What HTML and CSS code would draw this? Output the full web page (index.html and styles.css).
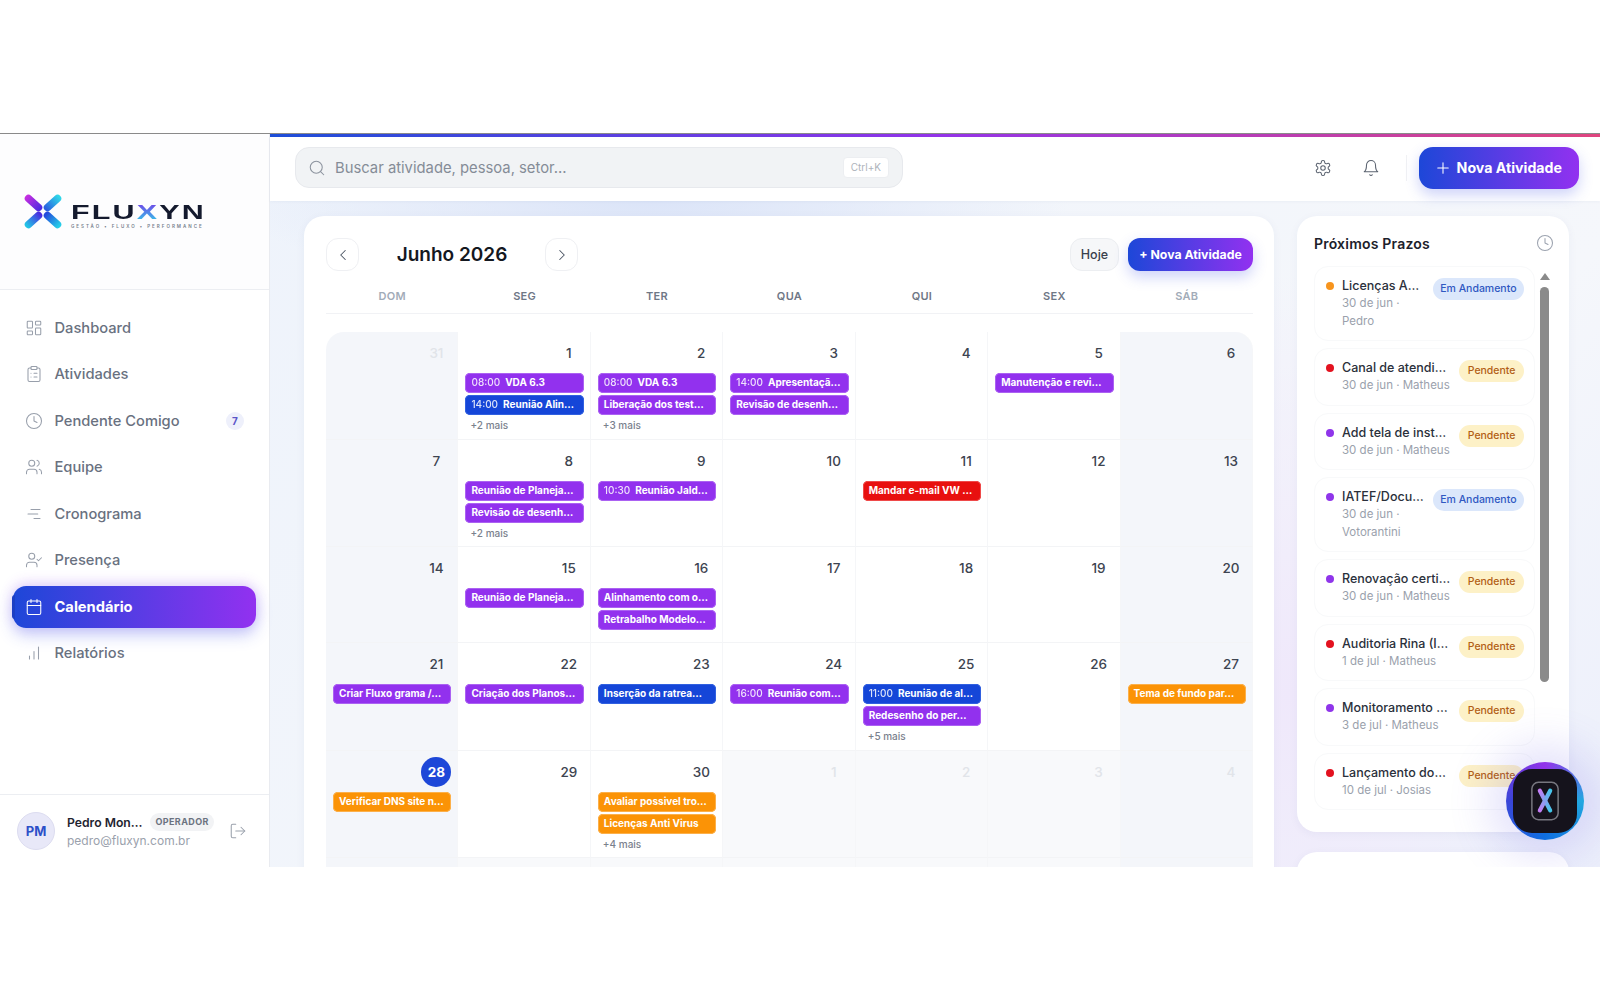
FILE: index.html
```html
<!DOCTYPE html>
<html lang="pt-BR">
<head>
    <meta charset="UTF-8">
    <meta name="viewport" content="width=device-width, initial-scale=1.0">
    <title>Fluxyn - Calendário</title>
    <link rel="stylesheet" href="styles.css">
</head>
<body>
    <svg class="sprite" xmlns="http://www.w3.org/2000/svg">
        <symbol id="i-dash" viewBox="0 0 24 24"><rect width="7" height="9" x="3" y="3" rx="1"/><rect width="7" height="5" x="14" y="3" rx="1"/><rect width="7" height="9" x="14" y="12" rx="1"/><rect width="7" height="5" x="3" y="16" rx="1"/></symbol>
        <symbol id="i-clip" viewBox="0 0 24 24"><rect width="8" height="4" x="8" y="2" rx="1"/><path d="M16 4h2a2 2 0 0 1 2 2v14a2 2 0 0 1-2 2H6a2 2 0 0 1-2-2V6a2 2 0 0 1 2-2h2"/><path d="M12 11h4M12 16h4M8 11h.01M8 16h.01"/></symbol>
        <symbol id="i-clock" viewBox="0 0 24 24"><circle cx="12" cy="12" r="10"/><polyline points="12 6 12 12 16 14"/></symbol>
        <symbol id="i-users" viewBox="0 0 24 24"><path d="M16 21v-2a4 4 0 0 0-4-4H6a4 4 0 0 0-4 4v2"/><circle cx="9" cy="7" r="4"/><path d="M22 21v-2a4 4 0 0 0-3-3.87"/><path d="M16 3.13a4 4 0 0 1 0 7.75"/></symbol>
        <symbol id="i-gantt" viewBox="0 0 24 24"><path d="M8 6h12M4 12h13M12 18h8"/></symbol>
        <symbol id="i-check" viewBox="0 0 24 24"><path d="M16 21v-2a4 4 0 0 0-4-4H6a4 4 0 0 0-4 4v2"/><circle cx="9" cy="7" r="4"/><polyline points="16 11 18 13 22 9"/></symbol>
        <symbol id="i-cal" viewBox="0 0 24 24"><path d="M8 2v4M16 2v4"/><rect width="18" height="18" x="3" y="4" rx="2"/><path d="M3 10h18"/></symbol>
        <symbol id="i-bars" viewBox="0 0 24 24"><path d="M12 20V10M18 20V4M6 20v-4"/></symbol>
        <symbol id="i-search" viewBox="0 0 24 24"><circle cx="11" cy="11" r="8"/><path d="m21 21-4.3-4.3"/></symbol>
        <symbol id="i-gear" viewBox="0 0 24 24"><path d="M12.22 2h-.44a2 2 0 0 0-2 2v.18a2 2 0 0 1-1 1.73l-.43.25a2 2 0 0 1-2 0l-.15-.08a2 2 0 0 0-2.73.73l-.22.38a2 2 0 0 0 .73 2.73l.15.1a2 2 0 0 1 1 1.72v.51a2 2 0 0 1-1 1.74l-.15.09a2 2 0 0 0-.73 2.73l.22.38a2 2 0 0 0 2.73.73l.15-.08a2 2 0 0 1 2 0l.43.25a2 2 0 0 1 1 1.73V20a2 2 0 0 0 2 2h.44a2 2 0 0 0 2-2v-.18a2 2 0 0 1 1-1.73l.43-.25a2 2 0 0 1 2 0l.15.08a2 2 0 0 0 2.73-.73l.22-.39a2 2 0 0 0-.73-2.73l-.15-.08a2 2 0 0 1-1-1.74v-.5a2 2 0 0 1 1-1.74l.15-.09a2 2 0 0 0 .73-2.73l-.22-.38a2 2 0 0 0-2.73-.73l-.15.08a2 2 0 0 1-2 0l-.43-.25a2 2 0 0 1-1-1.73V4a2 2 0 0 0-2-2z"/><circle cx="12" cy="12" r="3"/></symbol>
        <symbol id="i-bell" viewBox="0 0 24 24"><path d="M6 8a6 6 0 0 1 12 0c0 7 3 9 3 9H3s3-2 3-9"/><path d="M10.3 21a1.94 1.94 0 0 0 3.4 0"/></symbol>
        <symbol id="i-out" viewBox="0 0 24 24"><path d="M9 21H5a2 2 0 0 1-2-2V5a2 2 0 0 1 2-2h4"/><polyline points="16 17 21 12 16 7"/><path d="M21 12H9"/></symbol>
        <symbol id="i-plus" viewBox="0 0 24 24"><path d="M5 12h14M12 5v14"/></symbol>
        <symbol id="i-left" viewBox="0 0 24 24"><path d="m15 18-6-6 6-6"/></symbol>
        <symbol id="i-right" viewBox="0 0 24 24"><path d="m9 18 6-6-6-6"/></symbol>
    </svg>

    <div class="app">
        <aside class="sidebar">
            <div class="brand">
                <svg class="brand-mark" viewBox="0 0 38 35" fill="none" stroke-width="7.5" stroke-linecap="round">
                    <defs>
                        <linearGradient id="lg-a" gradientUnits="userSpaceOnUse" x1="3" y1="3" x2="16" y2="15"><stop offset="0" stop-color="#c22ee0"/><stop offset="1" stop-color="#4f2be0"/></linearGradient>
                        <linearGradient id="lg-b" gradientUnits="userSpaceOnUse" x1="35" y1="3" x2="22" y2="15"><stop offset="0" stop-color="#2fd6e8"/><stop offset="1" stop-color="#2a5fe0"/></linearGradient>
                        <linearGradient id="lg-c" gradientUnits="userSpaceOnUse" x1="3" y1="32" x2="16" y2="20"><stop offset="0" stop-color="#22c4e6"/><stop offset="1" stop-color="#4a2be0"/></linearGradient>
                        <linearGradient id="lg-d" gradientUnits="userSpaceOnUse" x1="35" y1="32" x2="22" y2="20"><stop offset="0" stop-color="#25cde8"/><stop offset="1" stop-color="#2448dc"/></linearGradient>
                    </defs>
                    <path d="M4.5 4.5 14.5 13.5" stroke="url(#lg-a)"/>
                    <path d="M33.5 4.5 23.5 13.5" stroke="url(#lg-b)"/>
                    <path d="M4.5 30.5 14.5 21.5" stroke="url(#lg-c)"/>
                    <path d="M33.5 30.5 23.5 21.5" stroke="url(#lg-d)"/>
                </svg>
                <div class="brand-text">
                    <div class="brand-name">FLU<span class="brand-x">X</span>YN</div>
                    <div class="brand-sub">GESTÃO • FLUXO • PERFORMANCE</div>
                </div>
            </div>

            <nav class="nav">
                <a class="nav-item"><svg class="icon"><use href="#i-dash"/></svg>Dashboard</a>
                <a class="nav-item"><svg class="icon"><use href="#i-clip"/></svg>Atividades</a>
                <a class="nav-item"><svg class="icon"><use href="#i-clock"/></svg>Pendente Comigo<span class="nav-badge">7</span></a>
                <a class="nav-item"><svg class="icon"><use href="#i-users"/></svg>Equipe</a>
                <a class="nav-item"><svg class="icon"><use href="#i-gantt"/></svg>Cronograma</a>
                <a class="nav-item"><svg class="icon"><use href="#i-check"/></svg>Presença</a>
                <a class="nav-item active"><svg class="icon"><use href="#i-cal"/></svg>Calendário</a>
                <a class="nav-item"><svg class="icon"><use href="#i-bars"/></svg>Relatórios</a>
            </nav>

            <div class="user">
                <div class="avatar">PM</div>
                <div class="user-info">
                    <div class="user-top"><span class="user-name">Pedro Mon…</span><span class="user-role">OPERADOR</span></div>
                    <div class="user-mail">pedro@fluxyn.com.br</div>
                </div>
                <svg class="icon logout"><use href="#i-out"/></svg>
            </div>
        </aside>

        <div class="main">
            <header class="topbar">
                <div class="search">
                    <svg class="icon search-icon"><use href="#i-search"/></svg>
                    <span class="search-text">Buscar atividade, pessoa, setor...</span>
                    <span class="kbd">Ctrl+K</span>
                </div>
                <div class="top-actions">
                    <svg class="icon top-icon"><use href="#i-gear"/></svg>
                    <svg class="icon top-icon"><use href="#i-bell"/></svg>
                    <span class="top-sep"></span>
                    <button class="btn-new"><svg class="icon"><use href="#i-plus"/></svg>Nova Atividade</button>
                </div>
            </header>

            <div class="content">
                <section class="calendar">
                    <div class="cal-head">
                        <button class="cal-nav"><svg class="icon"><use href="#i-left"/></svg></button>
                        <h2 class="cal-title">Junho 2026</h2>
                        <button class="cal-nav"><svg class="icon"><use href="#i-right"/></svg></button>
                        <div class="cal-actions">
                            <button class="btn-today">Hoje</button>
                            <button class="btn-add">+ Nova Atividade</button>
                        </div>
                    </div>

                    <div class="weekdays">
                        <span class="dim">DOM</span><span>SEG</span><span>TER</span><span>QUA</span><span>QUI</span><span>SEX</span><span class="dim">SÁB</span>
                    </div>

                    <div class="grid">
                        <!-- semana 1 -->
                        <div class="cell weekend out first"><div class="num">31</div></div>
                        <div class="cell"><div class="num">1</div>
                            <div class="ev purple"><span class="time">08:00</span>VDA 6.3</div>
                            <div class="ev blue"><span class="time">14:00</span>Reunião Alin…</div>
                            <div class="more">+2 mais</div></div>
                        <div class="cell"><div class="num">2</div>
                            <div class="ev purple"><span class="time">08:00</span>VDA 6.3</div>
                            <div class="ev purple">Liberação dos test…</div>
                            <div class="more">+3 mais</div></div>
                        <div class="cell"><div class="num">3</div>
                            <div class="ev purple"><span class="time">14:00</span>Apresentaçã…</div>
                            <div class="ev purple">Revisão de desenh…</div></div>
                        <div class="cell"><div class="num">4</div></div>
                        <div class="cell"><div class="num">5</div>
                            <div class="ev purple">Manutenção e revi…</div></div>
                        <div class="cell weekend last"><div class="num">6</div></div>

                        <!-- semana 2 -->
                        <div class="cell weekend"><div class="num">7</div></div>
                        <div class="cell"><div class="num">8</div>
                            <div class="ev purple">Reunião de Planeja…</div>
                            <div class="ev purple">Revisão de desenh…</div>
                            <div class="more">+2 mais</div></div>
                        <div class="cell"><div class="num">9</div>
                            <div class="ev purple"><span class="time">10:30</span>Reunião Jald…</div></div>
                        <div class="cell"><div class="num">10</div></div>
                        <div class="cell"><div class="num">11</div>
                            <div class="ev red">Mandar e-mail VW …</div></div>
                        <div class="cell"><div class="num">12</div></div>
                        <div class="cell weekend"><div class="num">13</div></div>

                        <!-- semana 3 -->
                        <div class="cell weekend"><div class="num">14</div></div>
                        <div class="cell"><div class="num">15</div>
                            <div class="ev purple">Reunião de Planeja…</div></div>
                        <div class="cell"><div class="num">16</div>
                            <div class="ev purple">Alinhamento com o…</div>
                            <div class="ev purple">Retrabalho Modelo…</div></div>
                        <div class="cell"><div class="num">17</div></div>
                        <div class="cell"><div class="num">18</div></div>
                        <div class="cell"><div class="num">19</div></div>
                        <div class="cell weekend"><div class="num">20</div></div>

                        <!-- semana 4 -->
                        <div class="cell weekend"><div class="num">21</div>
                            <div class="ev purple">Criar Fluxo grama /…</div></div>
                        <div class="cell"><div class="num">22</div>
                            <div class="ev purple">Criação dos Planos…</div></div>
                        <div class="cell"><div class="num">23</div>
                            <div class="ev blue">Inserção da ratrea…</div></div>
                        <div class="cell"><div class="num">24</div>
                            <div class="ev purple"><span class="time">16:00</span>Reunião com…</div></div>
                        <div class="cell"><div class="num">25</div>
                            <div class="ev blue"><span class="time">11:00</span>Reunião de al…</div>
                            <div class="ev purple">Redesenho do per…</div>
                            <div class="more">+5 mais</div></div>
                        <div class="cell"><div class="num">26</div></div>
                        <div class="cell weekend"><div class="num">27</div>
                            <div class="ev orange">Tema de fundo par…</div></div>

                        <!-- semana 5 -->
                        <div class="cell weekend"><div class="num today">28</div>
                            <div class="ev orange">Verificar DNS site n…</div></div>
                        <div class="cell"><div class="num">29</div></div>
                        <div class="cell"><div class="num">30</div>
                            <div class="ev orange">Avaliar possivel tro…</div>
                            <div class="ev orange">Licenças Anti Virus</div>
                            <div class="more">+4 mais</div></div>
                        <div class="cell out"><div class="num">1</div></div>
                        <div class="cell out"><div class="num">2</div></div>
                        <div class="cell out"><div class="num">3</div></div>
                        <div class="cell weekend out"><div class="num">4</div></div>

                        <!-- semana 6 -->
                        <div class="cell weekend out"></div>
                        <div class="cell out"></div>
                        <div class="cell out"></div>
                        <div class="cell out"></div>
                        <div class="cell out"></div>
                        <div class="cell out"></div>
                        <div class="cell weekend out"></div>
                    </div>
                </section>

                <aside class="side">
                    <section class="panel">
                        <div class="panel-head">
                            <h3>Próximos Prazos</h3>
                            <svg class="icon"><use href="#i-clock"/></svg>
                        </div>
                        <div class="panel-body">
                            <ul class="deadlines">
                                <li class="deadline"><i class="dot orange"></i><div class="dl-text"><div class="dl-title">Licenças A…</div><div class="dl-meta">30 de jun · Pedro</div></div><span class="pill prog">Em Andamento</span></li>
                                <li class="deadline"><i class="dot red"></i><div class="dl-text"><div class="dl-title">Canal de atendi…</div><div class="dl-meta">30 de jun · Matheus</div></div><span class="pill pend">Pendente</span></li>
                                <li class="deadline"><i class="dot purple"></i><div class="dl-text"><div class="dl-title">Add tela de inst…</div><div class="dl-meta">30 de jun · Matheus</div></div><span class="pill pend">Pendente</span></li>
                                <li class="deadline"><i class="dot purple"></i><div class="dl-text"><div class="dl-title">IATEF/Docu…</div><div class="dl-meta">30 de jun · Votorantini</div></div><span class="pill prog">Em Andamento</span></li>
                                <li class="deadline"><i class="dot purple"></i><div class="dl-text"><div class="dl-title">Renovação certi…</div><div class="dl-meta">30 de jun · Matheus</div></div><span class="pill pend">Pendente</span></li>
                                <li class="deadline"><i class="dot red"></i><div class="dl-text"><div class="dl-title">Auditoria Rina (I…</div><div class="dl-meta">1 de jul · Matheus</div></div><span class="pill pend">Pendente</span></li>
                                <li class="deadline"><i class="dot purple"></i><div class="dl-text"><div class="dl-title">Monitoramento …</div><div class="dl-meta">3 de jul · Matheus</div></div><span class="pill pend">Pendente</span></li>
                                <li class="deadline"><i class="dot red"></i><div class="dl-text"><div class="dl-title">Lançamento do…</div><div class="dl-meta">10 de jul · Josias</div></div><span class="pill pend">Pendente</span></li>
                            </ul>
                            <div class="scrollbar"><span class="scroll-up"></span><span class="scroll-thumb"></span></div>
                        </div>
                    </section>
                    <section class="panel panel-next"></section>
                </aside>
            </div>
        </div>

        <div class="fab">
            <div class="fab-glow"></div>
            <div class="fab-box">
                <svg viewBox="0 0 32 44" width="30" height="42" fill="none" stroke-linecap="round">
                    <defs>
                        <linearGradient id="fx-a" gradientUnits="userSpaceOnUse" x1="10" y1="10" x2="22" y2="33"><stop offset="0" stop-color="#c77bf5"/><stop offset="1" stop-color="#3fc8ea"/></linearGradient>
                        <linearGradient id="fx-b" gradientUnits="userSpaceOnUse" x1="22" y1="10" x2="10" y2="33"><stop offset="0" stop-color="#3fc8ea"/><stop offset="1" stop-color="#c77bf5"/></linearGradient>
                    </defs>
                    <rect x="2" y="2" width="28" height="40" rx="7" stroke="#77777f" stroke-width="1.6"/>
                    <path d="M10.5 11 21.5 32" stroke="url(#fx-a)" stroke-width="4.5"/>
                    <path d="M21.5 11 10.5 32" stroke="url(#fx-b)" stroke-width="4.5"/>
                </svg>
            </div>
        </div>
    </div>
</body>
</html>
```

FILE: styles.css
```css
* {
    box-sizing: border-box;
}

body {
    margin: 0;
    padding-top: 133px;
    background: #fff;
    font-family: Inter, "Noto Sans", sans-serif;
    color: #1f2937;
}

.sprite {
    display: none;
}

.icon {
    width: 18px;
    height: 18px;
    flex: none;
    fill: none;
    stroke: currentColor;
    stroke-width: 1.4;
    stroke-linecap: round;
    stroke-linejoin: round;
}

.app {
    position: relative;
    display: flex;
    height: 734px;
    overflow: hidden;
    border-top: 1px solid #8a8a8a;
}

/* sidebar */
.sidebar {
    width: 270px;
    flex: none;
    display: flex;
    flex-direction: column;
    background: #fff;
    border-right: 1px solid #e9ebf0;
}

.brand {
    height: 156px;
    flex: none;
    display: flex;
    align-items: center;
    gap: 9px;
    padding: 0 0 1px 24px;
    border-bottom: 1px solid #eceef2;
    background: #fdfdfe;
}

.brand-mark {
    width: 38px;
    height: 35px;
    flex: none;
}

.brand-text {
    padding-top: 10px;
}

.brand-name {
    font-family: "Liberation Sans", sans-serif;
    font-size: 21px;
    line-height: 17px;
    font-weight: 700;
    letter-spacing: 1.5px;
    color: #141a2e;
    transform: scaleX(1.45);
    transform-origin: left center;
}

.brand-x {
    background: linear-gradient(180deg, #7c2be8, #2fd0e8);
    -webkit-background-clip: text;
    background-clip: text;
    color: transparent;
}

.brand-sub {
    margin-top: 4px;
    font-size: 4.5px;
    line-height: 6px;
    font-weight: 600;
    letter-spacing: 2px;
    color: #767d8c;
    white-space: nowrap;
}

.nav {
    flex: 1;
    display: flex;
    flex-direction: column;
    gap: 4.45px;
    padding: 17px 13px 0;
}

.nav-item {
    position: relative;
    display: flex;
    align-items: center;
    gap: 12px;
    height: 42px;
    padding: 0 12px 0 11.5px;
    border-radius: 13px;
    font-size: 14.7px;
    font-weight: 500;
    color: #69717f;
}

.nav-item .icon {
    color: #989fab;
}

.nav-item.active {
    color: #fff;
    font-weight: 700;
    background: linear-gradient(90deg, #1d47d8, #9231f0);
    box-shadow: 0 7px 16px rgba(50, 70, 230, .28), 0 -3px 14px rgba(147, 51, 234, .2);
}

.nav-item.active .icon {
    color: #fff;
}

.nav-item.active::before {
    content: "";
    position: absolute;
    left: -1px;
    top: 9px;
    bottom: 9px;
    width: 3px;
    border-radius: 3px 0 0 3px;
    background: #1c3fc4;
}

.nav-badge {
    width: 18px;
    height: 18px;
    margin-left: auto;
    margin-right: 0;
    border-radius: 50%;
    background: #eef0fb;
    color: #5a55c8;
    font-size: 10px;
    font-weight: 700;
    line-height: 18px;
    text-align: center;
}

.user {
    height: 73px;
    flex: none;
    display: flex;
    align-items: center;
    padding: 0 22px 0 17px;
    border-top: 1px solid #eceef2;
}

.avatar {
    width: 38px;
    height: 38px;
    flex: none;
    border-radius: 50%;
    background: #e8e8f8;
    border: 1px solid #dcdcf0;
    color: #2d50c8;
    font-size: 13px;
    font-weight: 700;
    line-height: 36px;
    text-align: center;
}

.user-info {
    flex: 1;
    min-width: 0;
    margin-left: 12px;
}

.user-top {
    display: flex;
    align-items: center;
    gap: 8px;
}

.user-name {
    font-size: 12.2px;
    font-weight: 600;
    color: #1f2430;
    white-space: nowrap;
}

.user-role {
    padding: 0 5px;
    height: 18px;
    border-radius: 9px;
    background: #f2f3f5;
    color: #6b7280;
    font-size: 9px;
    font-weight: 700;
    line-height: 18px;
    letter-spacing: .4px;
}

.user-mail {
    margin-top: 2px;
    font-size: 12px;
    line-height: 16px;
    color: #9aa1ac;
}

.logout {
    color: #9aa1ac;
}

/* main */
.main {
    flex: 1;
    min-width: 0;
    display: flex;
    flex-direction: column;
    background:
        radial-gradient(420px 90px at 380px 66px, #dbe4f8 0, rgba(221, 230, 248, 0) 100%),
        radial-gradient(240px 420px at 1020px 560px, #efe8fb 0, rgba(239, 232, 251, 0) 100%),
        linear-gradient(135deg, #eef3fb, #f5f7fb 70%, #eceffb);
}

.main::before {
    content: "";
    height: 3px;
    flex: none;
    background: linear-gradient(90deg, #1d4ed8, #9333ea 50%, #e0457f);
}

.topbar {
    height: 64px;
    flex: none;
    display: flex;
    align-items: center;
    justify-content: space-between;
    padding: 0 21px 3px 25px;
    background: #fff;
    box-shadow: 0 1px 3px rgba(30, 50, 100, .04);
}

.search {
    width: 608px;
    height: 41px;
    display: flex;
    align-items: center;
    padding: 0 13px 0 12px;
    background: #f1f3f5;
    border: 1px solid #e7e9ed;
    border-radius: 14px;
}

.search-icon {
    color: #8c939e;
}

.search-text {
    flex: 1;
    margin-left: 9px;
    font-size: 14.8px;
    color: #858c97;
}

.kbd {
    padding: 0 7px;
    height: 21px;
    background: #fff;
    border: 1px solid #eceef1;
    border-radius: 4px;
    color: #aeb3bb;
    font-size: 10px;
    line-height: 19px;
}

.top-actions {
    display: flex;
    align-items: center;
}

.top-icon {
    color: #5b6370;
    margin-right: 30px;
}

.top-sep {
    width: 1px;
    height: 26px;
    margin: 0 12px 0 -4px;
    background: #f0f1f4;
}

.btn-new {
    display: flex;
    align-items: center;
    gap: 5px;
    height: 42px;
    padding: 0 17px 0 15px;
    border: none;
    border-radius: 14px;
    background: linear-gradient(90deg, #1d47d8, #9231f0);
    box-shadow: 0 6px 14px rgba(60, 80, 230, .25);
    color: #fff;
    font-family: inherit;
    font-size: 14.2px;
    font-weight: 700;
    white-space: nowrap;
}

.content {
    flex: 1;
    min-height: 0;
    display: flex;
    align-items: flex-start;
    gap: 23px;
    padding: 15px 31px 0 34px;
}

/* calendar */
.calendar {
    flex: 1;
    min-width: 0;
    padding: 22px 21px 0 22px;
    background: #fff;
    border-radius: 20px;
    box-shadow: 0 2px 10px rgba(40, 60, 120, .05);
}

.cal-head {
    display: flex;
    align-items: center;
    height: 33px;
}

.cal-nav {
    width: 33px;
    height: 33px;
    display: flex;
    align-items: center;
    justify-content: center;
    padding: 0;
    background: #fff;
    border: 1px solid #eff0f3;
    border-radius: 12px;
    color: #4b5563;
}

.cal-title {
    width: 186px;
    margin: 0;
    font-size: 19px;
    font-weight: 600;
    text-align: center;
    color: #14181f;
}

.cal-actions {
    display: flex;
    gap: 9px;
    margin-left: auto;
}

.btn-today {
    width: 49px;
    height: 33px;
    padding: 0;
    background: #f6f7f9;
    border: 1px solid #eceef1;
    border-radius: 12px;
    font-family: inherit;
    font-size: 12.5px;
    font-weight: 500;
    color: #39404c;
}

.btn-add {
    width: 125px;
    height: 33px;
    padding: 0;
    border: none;
    border-radius: 12px;
    background: linear-gradient(90deg, #1d47d8, #9231f0);
    box-shadow: 0 6px 14px rgba(60, 80, 230, .25);
    color: #fff;
    font-family: inherit;
    font-size: 12.3px;
    font-weight: 700;
}

.weekdays {
    display: grid;
    grid-template-columns: repeat(7, 1fr);
    height: 29px;
    margin: 14px 0 18px;
    border-bottom: 1px solid #f1f2f5;
    font-size: 11px;
    font-weight: 600;
    line-height: 23px;
    letter-spacing: .3px;
    text-align: center;
    color: #6f7786;
}

.weekdays .dim {
    color: #a2abb8;
}

.grid {
    display: grid;
    grid-template-columns: repeat(7, minmax(0, 1fr));
}

.cell {
    min-height: 96px;
    padding: 6px 6px 5.5px 7px;
    background: #fff;
    border-right: 1px solid #f5f6f8;
    border-bottom: 1px solid #f3f4f6;
}

.cell.weekend {
    background: #f4f6fa;
}

.cell.out {
    background: #f8f9fb;
}

.cell.weekend.out {
    background: #f4f6fa;
}

.cell.first {
    border-top-left-radius: 18px;
}

.cell.last {
    border-top-right-radius: 18px;
}

.num {
    width: 30px;
    height: 30px;
    margin: 0 0 5px auto;
    border-radius: 50%;
    font-size: 13.5px;
    font-weight: 500;
    line-height: 30px;
    text-align: center;
    color: #3d4450;
}

.out .num {
    color: #e1e4e9;
}

.num.today {
    background: #1d47d8;
    color: #fff;
    font-weight: 700;
}

.ev {
    height: 20px;
    margin-bottom: 2px;
    padding: 0 6px;
    overflow: hidden;
    border-radius: 5px;
    color: #fff;
    font-size: 10px;
    font-weight: 700;
    line-height: 19px;
    white-space: nowrap;
}

.ev.purple {
    background: #9231ee;
    box-shadow: 0 0 0 1px #ab62f2 inset;
}

.ev.blue {
    background: #1546d8;
    box-shadow: 0 0 0 1px #3160e0 inset;
}

.ev.red {
    background: #e8100f;
    box-shadow: 0 0 0 1px #ef4a4a inset;
}

.ev.orange {
    background: #fb9306;
    box-shadow: 0 0 0 1px #fcb04a inset;
}

.time {
    margin-right: 5px;
    font-weight: 500;
    opacity: .85;
}

.more {
    margin-top: 3px;
    padding-left: 5px;
    font-size: 10px;
    line-height: 15px;
    font-weight: 500;
    color: #7a818d;
}

/* right column */
.side {
    width: 272px;
    flex: none;
    display: flex;
    flex-direction: column;
    gap: 20px;
}

.panel {
    padding: 18px 20px 22px 17px;
    background: #fff;
    border-radius: 20px;
    box-shadow: 0 2px 10px rgba(40, 60, 120, .05);
}

.panel-next {
    height: 90px;
    flex: none;
}

.panel-head {
    display: flex;
    align-items: center;
    justify-content: space-between;
    height: 18px;
    margin: 0 -5px 14px 0;
    color: #9ca3af;
}

.panel-head h3 {
    margin: 0;
    font-size: 14px;
    font-weight: 600;
    letter-spacing: .2px;
    color: #1c212b;
}

.panel-body {
    display: flex;
    gap: 5px;
}

.deadlines {
    width: 221px;
    flex: none;
    display: flex;
    flex-direction: column;
    gap: 7px;
    margin: 0;
    padding: 0;
    list-style: none;
}

.deadline {
    display: flex;
    align-items: flex-start;
    padding: 10px 10px 10px 11px;
    border: 1px solid #f8f9fa;
    border-radius: 14px;
}

.dot {
    width: 8px;
    height: 8px;
    flex: none;
    margin: 5px 8px 0 0;
    border-radius: 50%;
}

.dot.orange {
    background: #f7941d;
}

.dot.red {
    background: #e3121f;
}

.dot.purple {
    background: #8f35ea;
}

.dl-text {
    flex: 1;
    min-width: 0;
    margin-right: 4px;
}

.dl-title {
    overflow: hidden;
    font-size: 12.5px;
    font-weight: 500;
    line-height: 18px;
    white-space: nowrap;
    color: #2a303b;
}

.dl-meta {
    font-size: 11.5px;
    line-height: 17.5px;
    color: #9aa1ac;
}

.pill {
    height: 22px;
    flex: none;
    margin-top: 1px;
    padding: 0 7.5px;
    border-radius: 11px;
    font-size: 10.5px;
    font-weight: 500;
    line-height: 22px;
    white-space: nowrap;
}

.pill.prog {
    background: #dbe7fb;
    color: #2f58c2;
}

.pill.pend {
    padding: 0 8.5px;
    background: #fdf1c7;
    color: #b25f16;
}

.scrollbar {
    width: 9px;
    flex: none;
    display: flex;
    flex-direction: column;
    align-items: center;
    padding-top: 7px;
}

.scroll-up {
    width: 0;
    height: 0;
    border-left: 5px solid transparent;
    border-right: 5px solid transparent;
    border-bottom: 7px solid #8a8a8a;
}

.scroll-thumb {
    width: 9px;
    height: 395px;
    margin-top: 7px;
    border-radius: 5px;
    background: #8a8a8a;
}

/* assistente flutuante */
.fab {
    position: absolute;
    left: 1506px;
    top: 628px;
    width: 78px;
    height: 78px;
}

.fab-glow {
    position: absolute;
    inset: 0;
    border-radius: 50%;
    background: conic-gradient(#9333ea, #22a7e0 90deg, #0f6fe0 180deg, #3a45d8 270deg, #9333ea);
    box-shadow: 0 0 40px 18px rgba(110, 100, 235, .18);
}

.fab-box {
    position: absolute;
    inset: 7px;
    display: flex;
    align-items: center;
    justify-content: center;
    border-radius: 19px;
    background: #15131c;
}
```
